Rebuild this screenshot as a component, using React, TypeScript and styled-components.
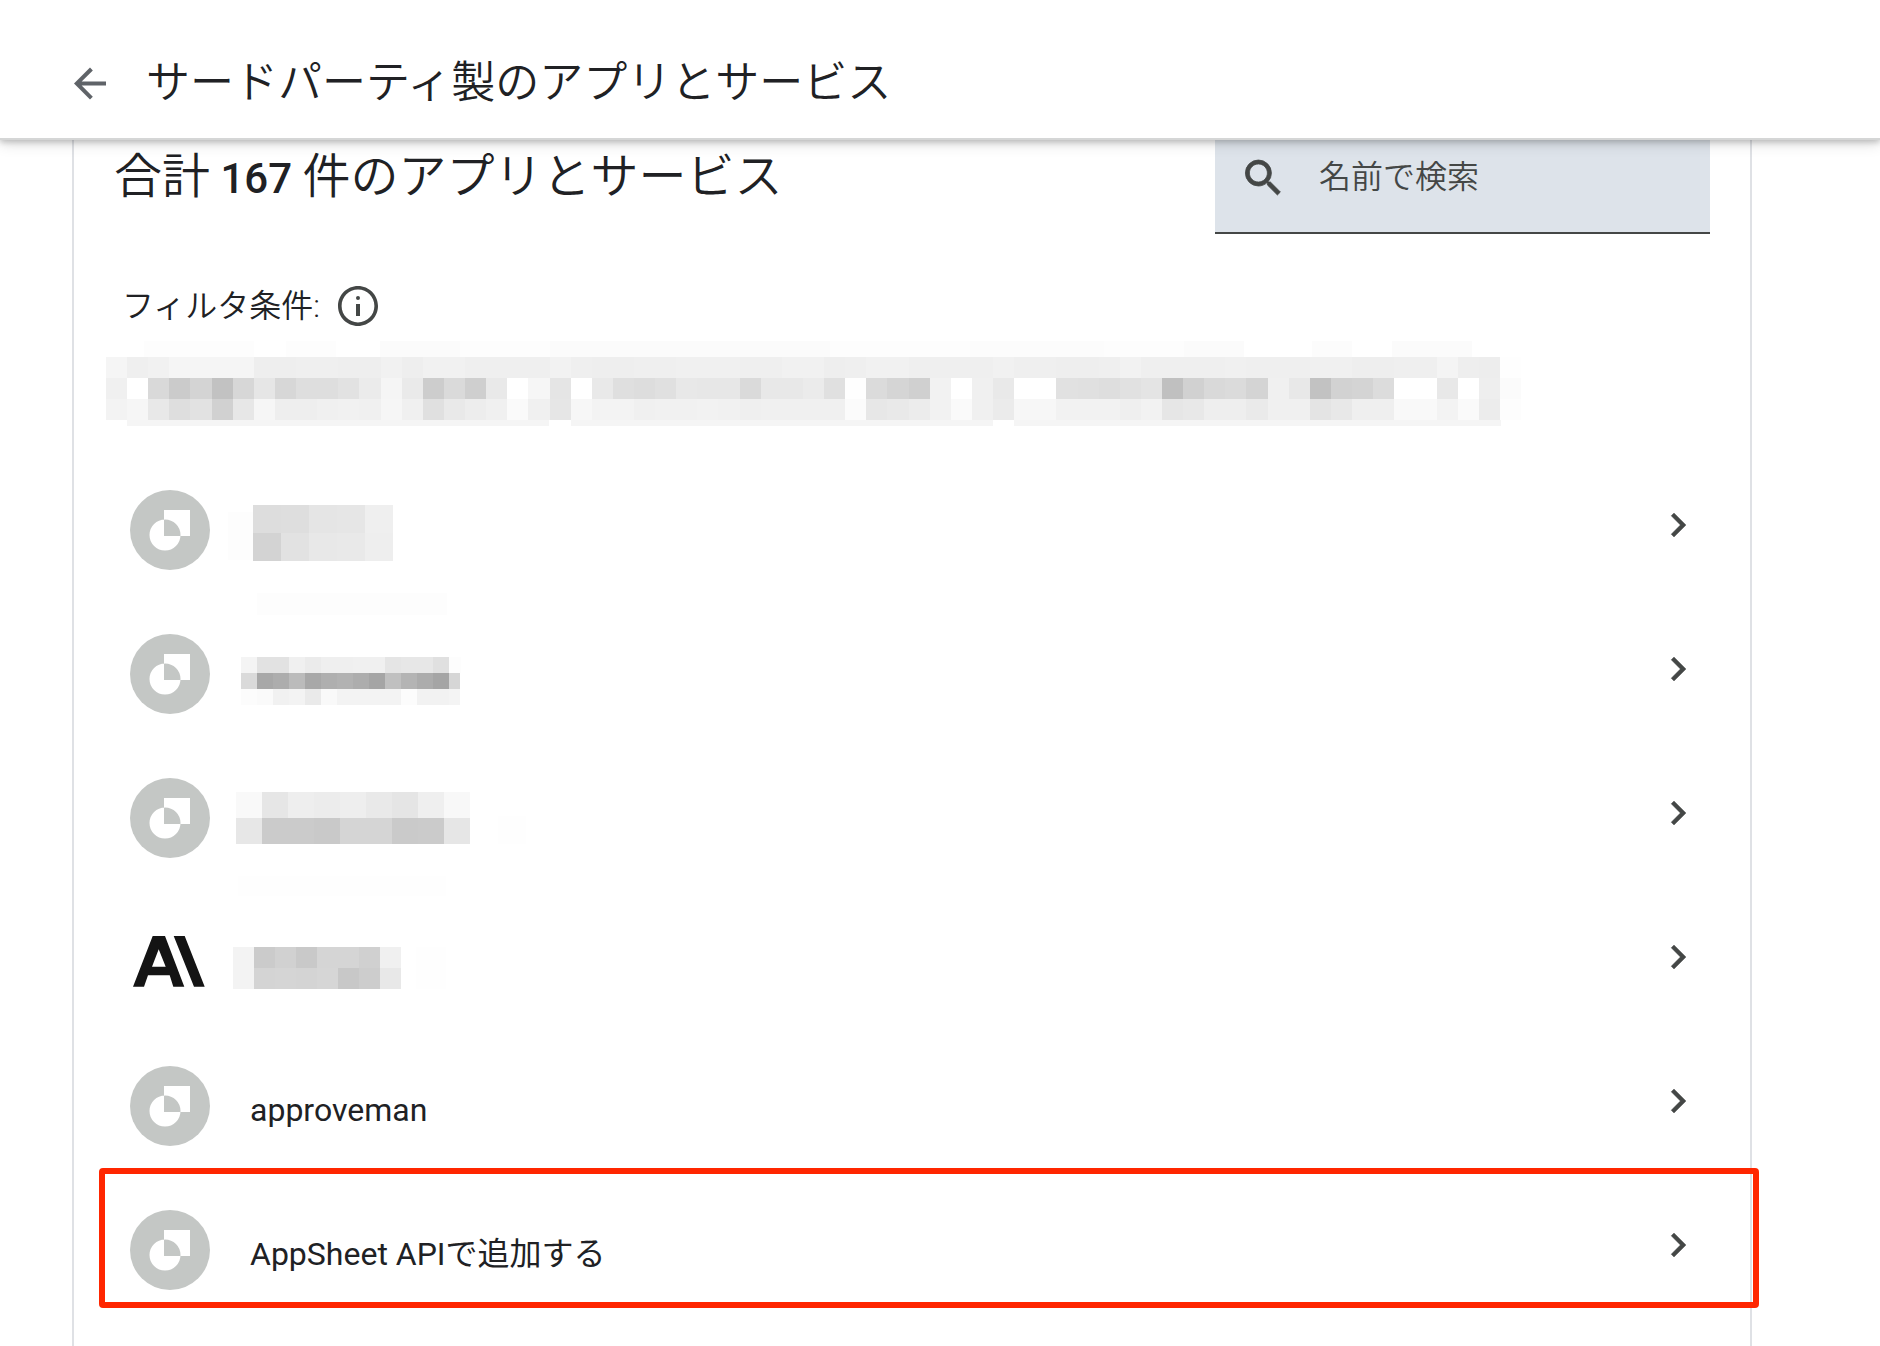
import React from "react";
import styled, { createGlobalStyle, css } from "styled-components";

const color = {
  text: "#202124",
  icon: "#444746",
  muted: "#5f6368",
  line: "#dfe1e5",
  field: "#dde3ea",
  avatar: "#c4c7c5",
  marker: "#ff2600",
};

const GlobalStyle = createGlobalStyle`
  *, *::before, *::after { box-sizing: border-box; }
  body {
    margin: 0;
    background: #fff;
    color: ${color.text};
    font-family: Roboto, "Noto Sans CJK JP", sans-serif;
    font-size: 32px;
  }
`;

const Page = styled.div`
  display: flex;
  flex-direction: column;
  min-height: 100vh;
`;

const Header = styled.header`
  position: relative;
  z-index: 1;
  display: flex;
  align-items: center;
  gap: 32px;
  height: 140px;
  padding: 28px 66px 0;
  background: #fff;
  border-bottom: 2px solid #d5d6d6;
  box-shadow: 0 2px 6px rgba(0, 0, 0, 0.22), 0 4px 14px rgba(0, 0, 0, 0.12);
`;

const IconButton = styled.button<{ $tone?: string }>`
  display: inline-flex;
  padding: 0;
  border: 0;
  background: none;
  color: ${(p) => p.$tone ?? color.icon};
  cursor: pointer;
`;

const Title = styled.h1`
  margin: 0;
  font-size: 44px;
  font-weight: 350;
  line-height: 64px;
`;

const Card = styled.main`
  flex: 1;
  margin: -19px 128px 0 72px;
  border: 2px solid ${color.line};
  border-width: 0 2px;
`;

const Toolbar = styled.div`
  display: flex;
  align-items: center;
  justify-content: space-between;
  padding: 0 40px;
`;

const Heading = styled.h2`
  margin: 0;
  font-size: 48px;
  font-weight: 350;
  line-height: 64px;
`;

const Count = styled.span`
  font-size: 42px;
  font-weight: 500;
`;

const SearchField = styled.label`
  display: flex;
  align-items: center;
  gap: 32px;
  width: 495px;
  height: 113px;
  padding: 0 24px;
  background: ${color.field};
  border-bottom: 2px solid ${color.icon};
  color: ${color.icon};
`;

const SearchInput = styled.input`
  flex: 1;
  min-width: 0;
  padding: 0;
  border: 0;
  outline: 0;
  background: none;
  color: inherit;
  font: inherit;
  font-weight: 350;
  line-height: 48px;
  &::placeholder {
    color: ${color.icon};
    opacity: 1;
  }
`;

const FilterBar = styled.div`
  display: flex;
  align-items: center;
  gap: 14px;
  margin-top: 48px;
  padding: 0 48px;
  font-weight: 350;
  line-height: 48px;
`;

const FilterChips = styled.div`
  height: 90px;
  margin: 6px 0 32px;
  padding-left: 32px;
`;

const List = styled.ul`
  margin: 0;
  padding: 0;
  list-style: none;
`;

const Item = styled.li<{ $marked?: boolean }>`
  position: relative;
  height: 144px;
  ${(p) =>
    p.$marked &&
    css`
      &::after {
        content: "";
        position: absolute;
        inset: -10px -9px 14px 25px;
        border: 6px solid ${color.marker};
        border-radius: 4px;
        pointer-events: none;
      }
    `}
`;

const RowLink = styled.a`
  display: flex;
  align-items: flex-start;
  height: 100%;
  padding: 32px 48px 0 56px;
  color: inherit;
  text-decoration: none;
`;

const Name = styled.span`
  flex: 1;
  padding-left: 40px;
  line-height: 88px;
`;

const HiddenName = styled.span`
  flex: 1;
  padding-left: 16px;
  height: 80px;
`;

const Chevron = styled.span`
  display: flex;
  align-items: center;
  height: 70px;
  color: ${color.icon};
`;

const Drawing = styled.svg`
  display: block;
  flex: none;
  overflow: visible;
`;

function Icon({ d, weight = 0 }: { d: string; weight?: number }) {
  return (
    <Drawing
      width="48"
      height="48"
      viewBox="0 0 24 24"
      fill="currentColor"
      stroke="currentColor"
      strokeWidth={weight}
      aria-hidden="true"
    >
      <path d={d} />
    </Drawing>
  );
}

const paths = {
  back: "M20 11.3H7.83l5.59-5.59L12 4.3l-8 8 8 8 1.41-1.41L7.83 13.3H20v-2z",
  search:
    "M15.7 14.5h-.79l-.28-.27A6.471 6.471 0 0 0 16.2 10 6.5 6.5 0 1 0 9.7 16.5c1.61 0 3.09-.59 4.23-1.57l.27.28v.79l5 4.99L20.69 19.5l-4.99-5zm-6 0C7.21 14.5 5.2 12.49 5.2 10S7.21 5.5 9.7 5.5 14.2 7.51 14.2 10 12.19 14.5 9.7 14.5z",
  info: "M11 11h2v6h-2zM12 7a1 1 0 1 0 0 2 1 1 0 1 0 0-2zM12 2C6.48 2 2 6.48 2 12s4.48 10 10 10 10-4.48 10-10S17.52 2 12 2zm0 18.2c-4.52 0-8.2-3.68-8.2-8.2s3.68-8.2 8.2-8.2 8.2 3.68 8.2 8.2-3.68 8.2-8.2 8.2z",
  next: "M10 6 8.59 7.41 13.17 12l-4.58 4.59L10 18l6-6z",
};

function DefaultAvatar() {
  return (
    <Drawing width="80" height="80" viewBox="0 0 80 80" aria-hidden="true">
      <circle cx="40" cy="40" r="40" fill={color.avatar} />
      <path
        fill="#fff"
        fillRule="evenodd"
        d="M34 20h26v26H34zM19.5 45a15.5 15.5 0 1 0 31 0a15.5 15.5 0 1 0-31 0z"
      />
    </Drawing>
  );
}

function SlashLogo() {
  return (
    <Drawing width="80" height="80" viewBox="0 0 80 80" aria-hidden="true">
      <path
        fill="#141414"
        fillRule="evenodd"
        d="M3 64.7 22.7 14H35l19.3 50.7h-11l-3.6-11.4H18L14 64.7zM28.7 27.3 22 44.7h13.7zM43.7 14h11l20 50.7H64z"
      />
    </Drawing>
  );
}

type Block = { x: number; y: number; w: number; h: number; rows: number[][] };
type Patch = [x: number, y: number, w: number, h: number, shade: number];

const grey = (v: number) => `rgb(${v},${v},${v})`;

function Mosaic({ width, height, block, patches = [] }: { width: number; height: number; block: Block; patches?: Patch[] }) {
  return (
    <Drawing width={width} height={height} shapeRendering="crispEdges" aria-hidden="true">
      {patches.map(([x, y, w, h, v], i) => (
        <rect key={`p${i}`} x={x} y={y} width={w} height={h} fill={grey(v)} />
      ))}
      {block.rows.map((row, r) =>
        row.map((v, c) => (
          <rect key={`${r}-${c}`} x={block.x + c * block.w} y={block.y + r * block.h} width={block.w} height={block.h} fill={grey(v)} />
        )),
      )}
    </Drawing>
  );
}

const filterBlock: Block = {
  x: 0,
  y: 21,
  w: 21.12,
  h: 21,
  rows: [
    [245, 239, 241, 245, 245, 245, 245, 238, 238, 239, 239, 238, 238, 241, 238, 241, 241, 239, 239, 239, 239, 242, 239, 238, 238, 239, 239, 240, 240, 240, 239, 239, 241, 241, 238, 239, 241, 241, 239, 239, 239, 239, 241, 239, 239, 238, 238, 239, 242, 239, 239, 239, 239, 240, 239, 239, 239, 240, 240, 238, 238, 239, 239, 244, 238, 237, 254],
    [240, 255, 217, 203, 212, 194, 215, 230, 215, 222, 222, 226, 235, 245, 234, 205, 218, 207, 233, 255, 246, 229, 255, 233, 223, 221, 224, 232, 231, 231, 218, 232, 232, 235, 224, 254, 219, 213, 208, 242, 255, 240, 233, 255, 255, 225, 224, 222, 225, 228, 192, 209, 217, 219, 212, 240, 232, 194, 210, 212, 220, 255, 255, 232, 255, 238, 251],
    [243, 246, 232, 222, 226, 209, 231, 246, 238, 238, 240, 241, 240, 246, 240, 224, 233, 237, 240, 250, 240, 230, 247, 243, 243, 240, 241, 241, 242, 241, 239, 240, 240, 240, 240, 251, 231, 233, 236, 242, 250, 240, 235, 247, 247, 242, 242, 242, 239, 242, 230, 232, 238, 238, 234, 240, 240, 228, 232, 239, 239, 249, 249, 243, 250, 236, 253],
  ],
};

const filterPatches: Patch[] = [
  [38, 5, 110, 16, 253],
  [180, 5, 50, 16, 253],
  [274, 5, 80, 16, 251],
  [354, 5, 90, 16, 253],
  [444, 5, 280, 16, 251],
  [724, 5, 140, 16, 253],
  [864, 5, 134, 16, 252],
  [998, 5, 80, 16, 253],
  [1078, 5, 60, 16, 251],
  [1206, 5, 40, 16, 252],
  [1286, 5, 80, 16, 251],
  [21, 84, 422, 6, 245],
  [465, 84, 422, 6, 245],
  [908, 84, 487, 6, 245],
];

type App = { id: string; name?: string; logo?: boolean; marked?: boolean; block?: Block; patches?: Patch[] };

const apps: App[] = [
  {
    id: "app-1",
    block: { x: 27, y: 15, w: 28, h: 28, rows: [[221, 222, 229, 230, 239], [211, 226, 232, 233, 238]] },
    patches: [[2, 22, 25, 48, 253], [31, 103, 190, 22, 253]],
  },
  {
    id: "app-2",
    block: {
      x: 15, y: 23, w: 16, h: 16,
      rows: [
        [244, 226, 226, 240, 235, 239, 239, 240, 240, 229, 231, 231, 224],
        [218, 168, 173, 187, 168, 175, 178, 173, 165, 192, 180, 172, 165],
        [252, 250, 241, 243, 234, 249, 243, 243, 243, 243, 252, 242, 242],
      ],
    },
    patches: [[223, 23, 12, 16, 253], [223, 39, 11, 16, 214], [223, 55, 11, 16, 244]],
  },
  {
    id: "app-3",
    block: {
      x: 10, y: 14, w: 26, h: 26,
      rows: [[249, 230, 238, 236, 238, 233, 229, 239, 248], [231, 203, 203, 201, 213, 213, 202, 203, 230]],
    },
    patches: [[272, 38, 28, 28, 254], [12, 98, 208, 20, 254]],
  },
  {
    id: "app-4",
    logo: true,
    block: {
      x: 7, y: 25, w: 21, h: 21,
      rows: [[243, 203, 209, 201, 213, 213, 208, 240], [243, 212, 213, 212, 214, 200, 205, 232]],
    },
    patches: [[190, 25, 30, 42, 254]],
  },
  { id: "approveman", name: "approveman" },
  { id: "appsheet", name: "AppSheet APIで追加する", marked: true },
];

export default function App() {
  return (
    <Page lang="ja">
      <GlobalStyle />
      <Header>
        <IconButton type="button" aria-label="戻る" $tone={color.muted}>
          <Icon d={paths.back} />
        </IconButton>
        <Title>サードパーティ製のアプリとサービス</Title>
      </Header>
      <Card>
        <Toolbar>
          <Heading>
            合計<Count> 167 </Count>件のアプリとサービス
          </Heading>
          <SearchField>
            <Icon d={paths.search} weight={0.4} />
            <SearchInput type="text" placeholder="名前で検索" aria-label="名前で検索" />
          </SearchField>
        </Toolbar>
        <FilterBar>
          <span>フィルタ条件:</span>
          <IconButton type="button" aria-label="フィルタの詳細">
            <Icon d={paths.info} />
          </IconButton>
        </FilterBar>
        <FilterChips>
          <Mosaic width={1416} height={90} block={filterBlock} patches={filterPatches} />
        </FilterChips>
        <List>
          {apps.map((app) => (
            <Item key={app.id} $marked={app.marked}>
              <RowLink href={`#${app.id}`} aria-label={app.name ?? "非公開のアプリ"}>
                {app.logo ? <SlashLogo /> : <DefaultAvatar />}
                {app.block ? (
                  <HiddenName>
                    <Mosaic width={300} height={80} block={app.block} patches={app.patches} />
                  </HiddenName>
                ) : (
                  <Name>{app.name}</Name>
                )}
                <Chevron>
                  <Icon d={paths.next} weight={0.2} />
                </Chevron>
              </RowLink>
            </Item>
          ))}
        </List>
      </Card>
    </Page>
  );
}
